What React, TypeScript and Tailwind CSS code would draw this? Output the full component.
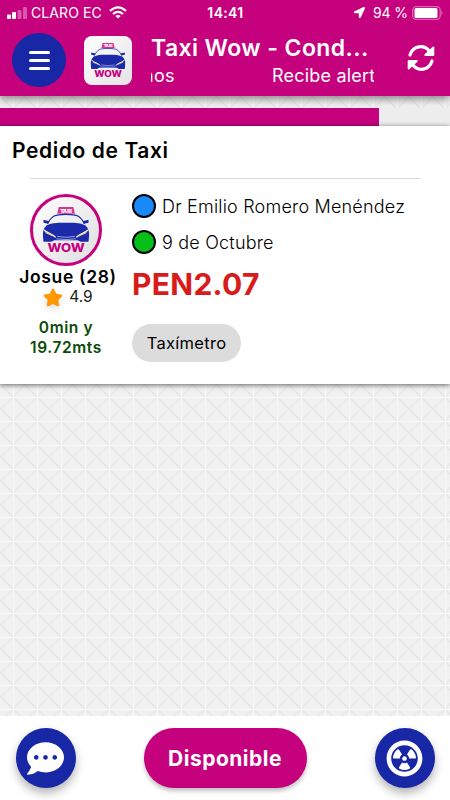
import { FaCommentDots, FaLocationArrow, FaRadiationAlt, FaStar } from 'react-icons/fa';
import { clsx } from 'clsx';

const STOPS = [
  { label: 'Dr Emilio Romero Menéndez', color: 'bg-[#1989fa]' },
  { label: '9 de Octubre', color: 'bg-[#06bf19]' },
];

function TaxiLogo({ className }: { className?: string }) {
  return (
    <svg viewBox="0 0 48 48" className={className}>
      {/* Roof sign */}
      <path d="M16.5 0h15l1.6 6.8H15z" fill="#d4378f" />
      <text x="24" y="5.7" textAnchor="middle" fontSize="5.6" fontWeight="900" fontFamily="Inter" fill="#fff" textLength="12">
        TAXI
      </text>
      {/* Roof and windscreen */}
      <path d="M5 17C10 9 12 7.5 24 7.5S38 9 43 17" fill="none" stroke="#1a2aa8" strokeWidth="1.1" />
      <path d="M1 13l6 1.500-1 2.500-5-1zM47 13l-6 1.500 1 2.500 5-1z" fill="#1a2aa8" />
      {/* Body */}
      <path d="M4 19c5-3 12-2.800 20-2.800S39 16 44 19c3 3 4 7 3.500 11l-.5 5.500h-8L36 34H12l-3 1.500H1L.5 30C0 26 1 22 4 19z" fill="#1a2aa8" />
      <path d="M1.500 23.500c4 3.500 8 3.500 12 7.500M46.500 23.500c-4 3.500-8 3.500-12 7.500" fill="none" stroke="#f4f4fb" strokeWidth="1.300" />
      <path d="M3 26l8 3.500M45 26l-8 3.500" stroke="#f3cf73" strokeWidth="1.300" />
      <path d="M15 30q9 2 18 0M14 32.500q10 1.500 20 0" fill="none" stroke="#b9c0ec" strokeWidth=".8" />
      <text
        x="24"
        y="46"
        textAnchor="middle"
        fontSize="11.500"
        fontWeight="800"
        fontFamily="Inter"
        fill="#c6017e"
        textLength="38"
        lengthAdjust="spacingAndGlyphs"
      >
        WOW
      </text>
    </svg>
  );
}

function SyncIcon() {
  return (
    <svg viewBox="0 0 28 28" className="h-7 w-7" fill="none" stroke="white" strokeWidth="3.200" strokeLinecap="round">
      <path d="M3 11C6 1.500 17 0 22.500 7.500M25 17C22 26.500 11 28 5.500 20.500" />
      <path d="M26.300 3.500v7.500h-8zM1.700 24.500V17h8z" fill="white" strokeWidth="2" strokeLinejoin="round" />
    </svg>
  );
}

function StatusBar() {
  return (
    <div className="flex h-[25px] items-center pl-[7px] pr-1.5 text-[14px]">
      <div className="flex w-[110px] flex-1 items-center">
        <svg viewBox="0 0 21 12" className="mr-[3px] h-3 w-[21px]" fill="white">
          <rect x="0" y="7.500" width="4" height="4.500" rx="1" />
          <rect x="5" y="5" width="4" height="7" rx="1" />
          <rect x="10.500" y="3" width="4" height="9" rx="1" opacity=".35" />
          <rect x="16" y="0" width="4" height="12" rx="1" opacity=".35" />
        </svg>
        <span className="w-[71px] whitespace-nowrap tracking-[0.1px]">CLARO EC</span>
        <svg viewBox="0 0 18 13" className="ml-[7px] h-[13px] w-[18px]" fill="none" stroke="white" strokeWidth="2.200">
          <path d="M1 4.800q8-7 16 0M4 8q5-4.300 10 0" />
          <path d="M9 12.500L6.300 9.900q2.700-2 5.400 0z" fill="white" stroke="none" />
        </svg>
      </div>
      <span className="w-[38px] whitespace-nowrap text-center font-semibold tracking-[0.35px]">14:41</span>
      <div className="flex flex-1 items-center justify-end">
        <FaLocationArrow className="mr-2 h-[11px] w-[11px]" />
        <span className="mr-1 whitespace-nowrap tracking-[-0.1px]">94 %</span>
        <svg viewBox="0 0 32 14" className="h-3.5 w-8">
          <rect x=".7" y=".7" width="27.500" height="12.600" rx="3.500" fill="none" stroke="white" strokeOpacity=".4" strokeWidth="1.300" />
          <rect x="2.500" y="2" width="23" height="10" rx="1.500" fill="white" />
          <path d="M29.500 4.500q2 2.500 0 5z" fill="white" opacity=".45" />
        </svg>
      </div>
    </div>
  );
}

function Header() {
  return (
    <header className="relative z-10 h-24 bg-[#c6017e] text-white shadow-[0_3px_8px_rgba(0,0,0,0.45)]">
      <StatusBar />
      <div className="flex h-[71px] pt-2">
        <button className="ml-3 flex h-[54px] w-[54px] flex-col items-center justify-center gap-[5px] rounded-full bg-[#1727a5]">
          {[0, 1, 2].map((i) => (
            <span key={i} className="h-[3px] w-[21px] rounded-full bg-white" />
          ))}
        </button>
        <div className="ml-[18px] mt-[3px] flex h-[49px] w-12 items-center justify-center rounded-[8px] bg-linear-to-br from-white to-[#e4e4e6]">
          <TaxiLogo className="h-[35px] w-9" />
        </div>
        <div className="ml-[19px] w-[223px]">
          <h1 className="h-[30px] whitespace-nowrap text-[23px] font-semibold leading-[31px] tracking-[0.4px]">Taxi Wow - Cond...</h1>
          {/* Scrolling announcement */}
          <div className="flex h-6 items-center overflow-hidden whitespace-nowrap text-[18px] tracking-[0.2px]">
            <span className="-ml-[8px] w-[129px] shrink-0 tracking-[0.3px]">nos</span>
            <span>Recibe alertas</span>
          </div>
        </div>
        <button className="ml-[33px] mt-[11px] h-7">
          <SyncIcon />
        </button>
      </div>
    </header>
  );
}

function RequestCard() {
  return (
    <section className="h-[258px] bg-white pt-2.5 shadow-[0_1px_5px_rgba(0,0,0,0.6)]">
      <h2 className="ml-3 h-[42px] text-[21px] font-semibold leading-[30px] tracking-[0.6px]">Pedido de Taxi</h2>
      <hr className="mx-[30px] border-[#d9d9d9]" />
      <div className="flex">
        <div className="flex w-[132px] flex-col items-center pt-[15px] text-center">
          <div className="flex h-[72px] w-[72px] items-center justify-center rounded-full border-3 border-[#c6017e] bg-linear-to-br from-white to-[#dedee1]">
            <TaxiLogo className="h-[47px] w-12" />
          </div>
          <p className="mt-px whitespace-nowrap pl-1 text-[17.500px] font-semibold leading-5 tracking-[0.65px]">Josue (28)</p>
          <p className="flex items-center pl-1 text-[15.500px] leading-5 text-[#222]">
            <FaStar className="mr-1.5 h-[19px] w-5 text-[#ff9800] drop-shadow-md" />
            4.9
          </p>
          <p className="mt-[11px] text-[15.500px] font-semibold leading-[19.500px] tracking-[0.6px] text-[#0b4b0b]">
            0min y
            <br />
            19.72mts
          </p>
        </div>
        <div className="pt-[15px]">
          {STOPS.map((stop) => (
            <div key={stop.label} className="flex h-9 items-start">
              <span className={clsx('mr-1.5 h-6 w-6 rounded-full border-2 border-black', stop.color)} />
              <span className="whitespace-nowrap text-[18px] font-light leading-[25px] tracking-[0.2px]">{stop.label}</span>
            </div>
          ))}
          <p className="text-[30px] font-bold leading-9 tracking-[0.3px] text-[#d81b1b]">PEN2.07</p>
          <span className="mt-[22px] flex h-[38px] w-[109px] items-center justify-center rounded-full bg-[#dcdcdc] text-[16.500px] tracking-[0.300px]">
            Taxímetro
          </span>
        </div>
      </div>
    </section>
  );
}

function Footer() {
  return (
    <footer className="flex h-[84px] items-start justify-between bg-white px-[15.500px] pt-3 text-white">
      <button className="flex h-[60px] w-[60px] items-center justify-center rounded-full bg-[#1727a5] shadow-[0_5px_10px_rgba(0,0,0,0.3)]">
        <FaCommentDots className="h-[37px] w-[37px]" />
      </button>
      <button className="h-[60px] w-[163px] rounded-full bg-[#c6017e] pt-px text-[21px] font-bold tracking-[0.500px] shadow-[0_3px_4px_rgba(0,0,0,0.25)]">
        Disponible
      </button>
      <button className="flex h-[60px] w-[60px] items-center justify-center rounded-full bg-[#1727a5] shadow-[0_5px_10px_rgba(0,0,0,0.3)]">
        <FaRadiationAlt className="h-[37px] w-[37px]" />
      </button>
    </footer>
  );
}

// Repeating tile texture behind the request list
function Texture() {
  return (
    <svg className="absolute inset-0 h-full w-full">
      <defs>
        <pattern id="tiles" x="13" y="13" width="24" height="24" patternUnits="userSpaceOnUse">
          <rect width="24" height="24" fill="#f1f1f1" />
          <path d="M0 0l24 24" stroke="#e6e6e6" strokeWidth="1.500" />
          <path d="M0 24L24 0" stroke="#eaeaea" strokeWidth="1.500" />
          <path d="M0 .5h24M.5 0v24" stroke="#f8f8f8" strokeWidth="1" />
        </pattern>
      </defs>
      <rect width="100%" height="100%" fill="url(#tiles)" />
    </svg>
  );
}

export default function App() {
  return (
    <div className="relative flex h-[800px] w-[450px] flex-col overflow-hidden font-[Inter,sans-serif] text-black">
      <Texture />
      <Header />
      <main className="relative flex-1 pt-3">
        <div className="h-[18px] bg-[#ededed]">
          <div className="h-full w-[379px] bg-[#c6017e]" />
        </div>
        <RequestCard />
      </main>
      <div className="relative">
        <Footer />
      </div>
    </div>
  );
}
